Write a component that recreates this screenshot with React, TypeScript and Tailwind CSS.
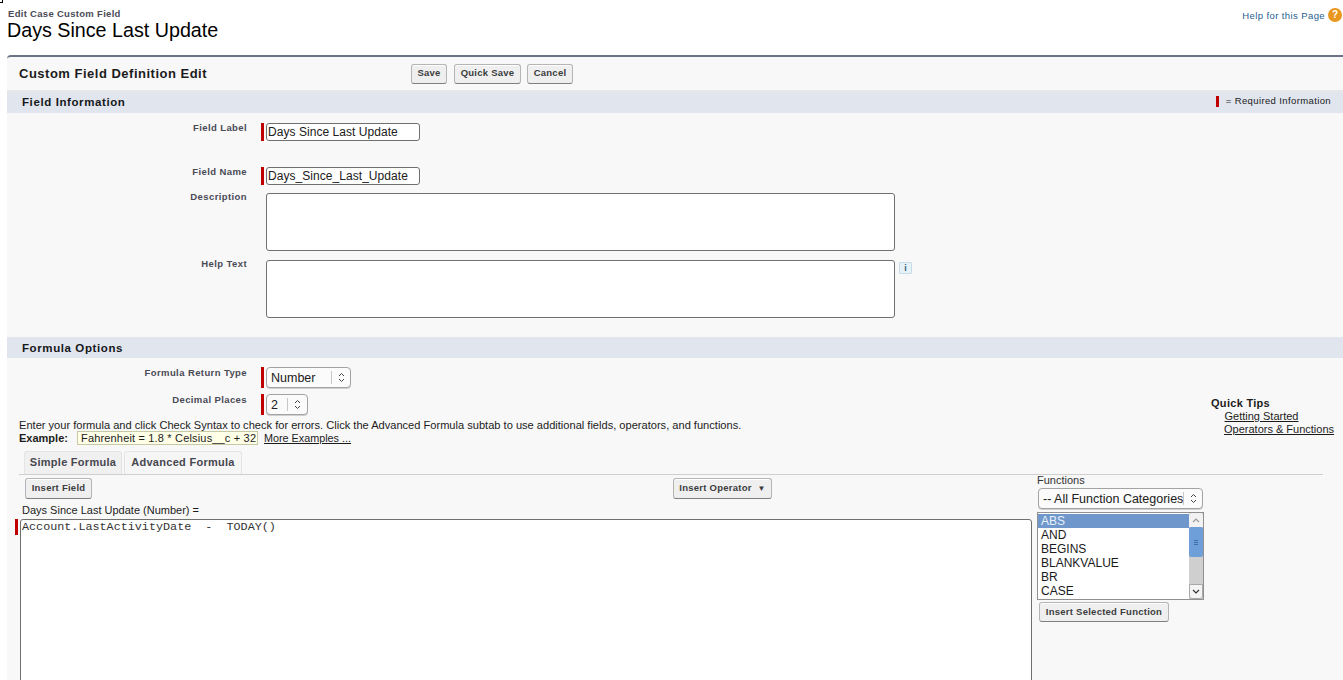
import { ReactNode } from "react";

const sans = "font-['Liberation_Sans',Arial,sans-serif]";

function RequiredBar({ className = "" }: { className?: string }) {
  return <span className={`block w-[3px] bg-[#c00000] ${className}`} />;
}

function Btn({ children, className = "" }: { children: ReactNode; className?: string }) {
  return (
    <button
      className={`block h-[20px] rounded-[3px] border border-[#b5b5b5] border-b-[#7f7f7f] bg-[#efefef] text-[9.5px] font-bold tracking-[0.25px] text-[#3c3d3e] shadow-[inset_0_1px_0_#fff] ${className}`}
    >
      {children}
    </button>
  );
}

function SectionBar({ title, children, titleClass = "" }: { title: string; children?: ReactNode; titleClass?: string }) {
  return (
    <div className="flex h-[21px] items-center justify-between bg-[#e0e5ee] pl-[15px] pr-[12px]">
      <span className={`text-[11.5px] font-bold tracking-[0.6px] text-[#16181a] ${titleClass}`}>{title}</span>
      {children}
    </div>
  );
}

function FieldLabel({ children, className = "" }: { children: ReactNode; className?: string }) {
  return (
    <div className={`w-[240px] shrink-0 text-right text-[9.5px] font-bold tracking-[0.4px] text-[#4a4a56] ${className}`}>
      {children}
    </div>
  );
}

function TextRow({ label, value, className = "" }: { label: string; value: string; className?: string }) {
  return (
    <div className={`flex ${className}`}>
      <FieldLabel className="mt-[-2px]">{label}</FieldLabel>
      <RequiredBar className="ml-[14px] h-[18px]" />
      <div className="ml-[2px] flex h-[18px] w-[154px] items-center rounded-[3px] border border-[#707070] bg-white pl-[1px] text-[12px] tracking-[0.05px] text-[#202020]">
        {value}
      </div>
    </div>
  );
}

function AreaRow({ label, className = "", children }: { label: string; className?: string; children?: ReactNode }) {
  return (
    <div className={`flex ${className}`}>
      <FieldLabel className="mt-[-3px]">{label}</FieldLabel>
      <div className="ml-[19px] h-[58px] w-[629px] rounded-[3px] border border-[#707070] bg-white" />
      {children}
    </div>
  );
}

function Chevrons() {
  return (
    <svg width="7" height="11" viewBox="0 0 7 11" className="text-[#444]">
      <path d="M1 4 L3.5 1.5 L6 4 M1 7 L3.5 9.5 L6 7" fill="none" stroke="currentColor" strokeWidth="1" />
    </svg>
  );
}

function SelectBox({ value, className = "", arrowClass = "" }: { value: string; className?: string; arrowClass?: string }) {
  return (
    <div className={`flex h-[21px] items-center rounded-[4px] border border-[#a3a3a3] bg-[#fbfbfb] text-[12.5px] text-[#202020] shadow-[0_1px_0_#d0d0d0] ${className}`}>
      <span className="flex-1 overflow-hidden whitespace-nowrap pl-[4px] pt-px">{value}</span>
      <span className={`flex h-[13px] shrink-0 items-center justify-center border-l border-[#c8c8c8] ${arrowClass}`}>
        <Chevrons />
      </span>
    </div>
  );
}

const functionNames = ["AND", "BEGINS", "BLANKVALUE", "BR", "CASE"];

export default function App() {
  return (
    <div className={`relative h-[680px] w-[1343px] overflow-hidden bg-white ${sans}`}>
      <span className="absolute left-0 top-0 h-[3px] w-[3px] border-b border-r border-black" />

      {/* page title */}
      <div className="flex h-[55px] justify-between pl-[7px] pr-[1px]">
        <div>
          <div className="pl-px pt-[8px] text-[9.5px] font-bold leading-[12px] tracking-[0.3px] text-[#4a4a56]">
            Edit Case Custom Field
          </div>
          <h1 className="mt-[-2px] text-[19.7px] leading-[24px] text-[#000]">Days Since Last Update</h1>
        </div>
        <div className="flex items-start gap-[3px] pt-[8px]">
          <span className="pt-[2px] text-[9.5px] leading-[12px] tracking-[0.4px] text-[#27608f]">Help for this Page</span>
          <span className="flex h-[14px] w-[14px] items-center justify-center rounded-full bg-[#e8961e] text-[10px] font-bold leading-none text-white">
            ?
          </span>
        </div>
      </div>

      {/* edit block */}
      <div className="ml-[7px] h-[625px] rounded-tl-[4px] border-t-[2px] border-[#6d7287] bg-[#f8f8f8]">
        <div className="flex h-[35px] items-center border-b-[2px] border-[#e8e8e8] pl-[12px]">
          <div className="w-[392px] text-[13px] font-bold tracking-[0.5px] text-[#1c1c1c]">Custom Field Definition Edit</div>
          <div className="flex gap-[7px]">
            <Btn className="w-[36px]">Save</Btn>
            <Btn className="w-[67px]">Quick Save</Btn>
            <Btn className="ml-[-1px] w-[46px]">Cancel</Btn>
          </div>
        </div>

        <SectionBar title="Field Information">
          <span className="mt-[-2px] flex items-center gap-[7px] text-[9.5px] tracking-[0.38px] text-[#1a1a1a]">
            <RequiredBar className="h-[11px]" />= Required Information
          </span>
        </SectionBar>

        <TextRow label="Field Label" value="Days Since Last Update" className="mt-[10px]" />
        <TextRow label="Field Name" value="Days_Since_Last_Update" className="mt-[26px]" />
        <AreaRow label="Description" className="mt-[8px]" />
        <AreaRow label="Help Text" className="mt-[9px]">
          <span className="ml-[4px] mt-[2px] flex h-[12px] w-[13px] items-center justify-center rounded-[1px] border border-[#c7dbe8] bg-[#e6f1f8] text-[9px] font-bold leading-none text-[#36617f]">
            i
          </span>
        </AreaRow>

        <div className="mt-[19px]">
          <SectionBar title="Formula Options" titleClass="pt-[2px]" />
        </div>

        <div className="flex justify-between pl-[12px] pr-[8px]">
          <div>
            <div className="ml-[-12px] mt-[9px] flex">
              <FieldLabel className="mt-[-1px]">Formula Return Type</FieldLabel>
              <RequiredBar className="ml-[14px] h-[21px]" />
              <SelectBox value="Number" className="ml-[2px] w-[85px]" arrowClass="w-[19px]" />
            </div>
            <div className="ml-[-12px] mt-[6px] flex">
              <FieldLabel className="mt-[-1px]">Decimal Places</FieldLabel>
              <RequiredBar className="ml-[14px] h-[21px]" />
              <SelectBox value="2" className="ml-[2px] w-[42px]" arrowClass="w-[20px]" />
            </div>
            <div className="mt-[4px] text-[11.09px] leading-[13px] text-[#1c1c1c]">
              Enter your formula and click Check Syntax to check for errors. Click the Advanced Formula subtab to use additional fields, operators, and functions.
            </div>
            <div className="mt-[-1px] flex h-[14px] items-center text-[11px] text-[#1c1c1c]">
              <b className="w-[58px]">Example:</b>
              <span className="flex h-[14px] w-[181px] items-center whitespace-nowrap border border-[#c7c9a5] bg-[#ffffe8] pl-[3px] tracking-[0.17px]">
                Fahrenheit = 1.8 * Celsius__c + 32
              </span>
              <span className="ml-[6px] text-[10.8px] underline">More Examples ...</span>
            </div>
          </div>
          <div className="w-[124px] pt-[39px] text-[11px] leading-[13px] text-[#1c1c1c]">
            <b className="tracking-[0.3px]">Quick Tips</b>
            <div className="pl-[13.5px] underline">Getting Started</div>
            <div className="pl-[13px] underline">Operators &amp; Functions</div>
          </div>
        </div>

        {/* tabs */}
        <div className="ml-[12px] mr-[20px] mt-[6px] flex h-[24px] border-b border-[#cfcfcf] pl-[5px] text-[11px] font-bold tracking-[0.28px] text-[#47474f]">
          <span className="flex h-[23px] w-[98px] items-center justify-center rounded-t-[3px] border border-b-0 border-[#e4e4e4] bg-[#f0f0f0] pb-[1px]">
            Simple Formula
          </span>
          <span className="ml-[2px] flex h-[23px] w-[118px] items-center justify-center rounded-t-[3px] border border-b-0 border-[#e4e4e4] bg-[#f6f6f6] pb-[1px]">
            Advanced Formula
          </span>
        </div>

        <div className="ml-[13px] flex items-start">
          <div className="w-[1012px]">
            <div className="mt-[3px] flex">
              <Btn className="ml-[5px] h-[21px] w-[67px]">Insert Field</Btn>
              <Btn className="ml-[581px] h-[21px] w-[99px]">
                Insert Operator <span className="ml-[3px] text-[8px]">▼</span>
              </Btn>
            </div>
            <div className="ml-[2px] mt-[5px] text-[11px] leading-[13px] text-[#1c1c1c]">Days Since Last Update (Number) =</div>
            <div className="relative mt-[2px] h-[300px] rounded-[3px] border border-[#707070] bg-white pl-[1px] pt-[1px] font-['Liberation_Mono',monospace] text-[11.75px] leading-[13px] text-[#333] whitespace-pre">
              Account.LastActivityDate  -  TODAY()
              <RequiredBar className="absolute left-[-6px] top-[-1px] h-[16px]" />
            </div>
          </div>

          <div className="ml-[5px] w-[167px]">
            <div className="mt-[-1px] text-[11px] leading-[13px] text-[#333]">Functions</div>
            <SelectBox value="-- All Function Categories" className="ml-[1px] mt-[1px] w-[165px]" arrowClass="w-[19px]" />
            <div className="mt-[3px] flex h-[88px] border border-[#909090] bg-white text-[12px] leading-[14px] text-[#1a1a1a]">
              <div className="w-[151px] pt-[1px]">
                <div className="h-[14px] bg-[#6f97cb] pl-[3px] text-[#e8f0fa]">ABS</div>
                {functionNames.map((name) => (
                  <div key={name} className="h-[14px] pl-[3px]">
                    {name}
                  </div>
                ))}
              </div>
              <div className="flex w-[14px] flex-col bg-[#cfcfcf]">
                <div className="flex h-[14px] items-center justify-center rounded-t-[3px] bg-[#f2f2f2]">
                  <svg width="8" height="5" viewBox="0 0 8 5">
                    <path d="M1 4 L4 1 L7 4" fill="none" stroke="#9a9a9a" strokeWidth="1.2" />
                  </svg>
                </div>
                <div className="flex h-[30px] items-center justify-center rounded-[2px] bg-[#6f9fd8]">
                  <span className="h-[5px] w-[4px] border-y border-[#3f6fa8] after:block after:h-px after:translate-y-[1px] after:bg-[#3f6fa8]" />
                </div>
                <div className="flex-1" />
                <div className="flex h-[15px] items-center justify-center rounded-b-[3px] border border-[#a8a8a8] bg-[#f4f4f4]">
                  <svg width="8" height="5" viewBox="0 0 8 5">
                    <path d="M1 1 L4 4 L7 1" fill="none" stroke="#333" strokeWidth="1.2" />
                  </svg>
                </div>
              </div>
            </div>
            <Btn className="ml-[2px] mt-[2px] h-[19px] w-[130px]">Insert Selected Function</Btn>
          </div>
        </div>
      </div>
    </div>
  );
}
